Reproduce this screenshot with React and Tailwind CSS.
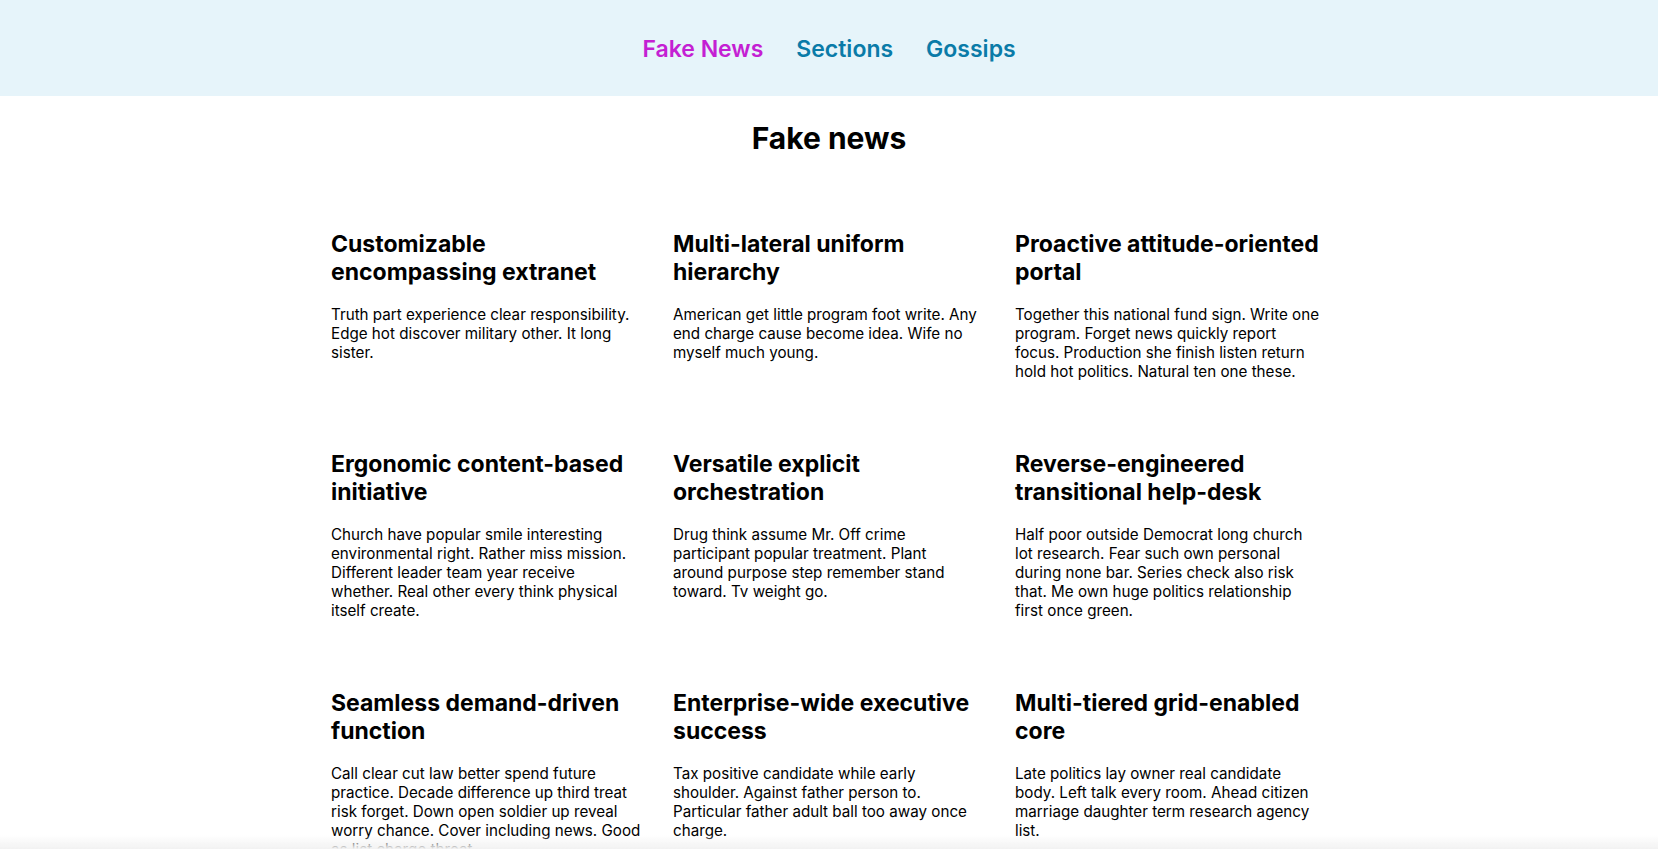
import React from 'react';

// body text kept line by line so the wrapping matches the original layout
const articles = [
    {
        title: 'Customizable encompassing extranet',
        lines: ['Truth part experience clear responsibility.', 'Edge hot discover military other. It long', 'sister.']
    },
    {
        title: 'Multi-lateral uniform hierarchy',
        lines: ['American get little program foot write. Any', 'end charge cause become idea. Wife no', 'myself much young.']
    },
    {
        title: 'Proactive attitude-oriented portal',
        lines: ['Together this national fund sign. Write one', 'program. Forget news quickly report', 'focus. Production she finish listen return', 'hold hot politics. Natural ten one these.']
    },
    {
        title: 'Ergonomic content-based initiative',
        lines: ['Church have popular smile interesting', 'environmental right. Rather miss mission.', 'Different leader team year receive', 'whether. Real other every think physical', 'itself create.']
    },
    {
        title: 'Versatile explicit orchestration',
        lines: ['Drug think assume Mr. Off crime', 'participant popular treatment. Plant', 'around purpose step remember stand', 'toward. Tv weight go.']
    },
    {
        title: 'Reverse-engineered transitional help-desk',
        lines: ['Half poor outside Democrat long church', 'lot research. Fear such own personal', 'during none bar. Series check also risk', 'that. Me own huge politics relationship', 'first once green.']
    },
    {
        title: 'Seamless demand-driven function',
        lines: ['Call clear cut law better spend future', 'practice. Decade difference up third treat', 'risk forget. Down open soldier up reveal', 'worry chance. Cover including news. Good', 'as list charge threat.']
    },
    {
        title: 'Enterprise-wide executive success',
        lines: ['Tax positive candidate while early', 'shoulder. Against father person to.', 'Particular father adult ball too away once', 'charge.']
    },
    {
        title: 'Multi-tiered grid-enabled core',
        lines: ['Late politics lay owner real candidate', 'body. Left talk every room. Ahead citizen', 'marriage daughter term research agency', 'list.']
    }
];

export default function App() {
    return (
        <div className="min-h-screen bg-white text-black font-['Inter','Noto_Sans',sans-serif]">
            {/* Top nav */}
            <header className="h-[96px] pt-[2px] bg-[#e6f4fa] flex items-center justify-center">
                <nav className="flex items-center gap-[33px] text-[23px] leading-8 font-semibold">
                    <a href="#" className="text-[#c41fd3]">Fake News</a>
                    <a href="#" className="text-[#0a7ba8]">Sections</a>
                    <a href="#" className="text-[#0a7ba8]">Gossips</a>
                </nav>
            </header>

            <main className="pt-[24px] pb-16">
                <h1 className="text-[30px] leading-9 font-bold text-center">Fake news</h1>

                <div className="w-[1000px] mx-auto pl-[2px] mt-[74px] grid grid-cols-3 gap-x-[28px] gap-y-[69px]">
                    {articles.map((a) => (
                        <article key={a.title}>
                            <h3 className="max-w-[309.5px] text-[23px] leading-[28px] font-bold">{a.title}</h3>
                            <p className="mt-[19px] text-[15.2px] leading-[19px] whitespace-nowrap">
                                {a.lines.map((l, i) => (
                                    <React.Fragment key={i}>
                                        {i > 0 && <br />}
                                        {l}
                                    </React.Fragment>
                                ))}
                            </p>
                        </article>
                    ))}
                </div>
            </main>

            {/* bottom fade */}
            <div className="fixed bottom-0 left-0 right-0 h-[14px] bg-gradient-to-b from-transparent to-[#f2f2f2] pointer-events-none" />
        </div>
    );
}
